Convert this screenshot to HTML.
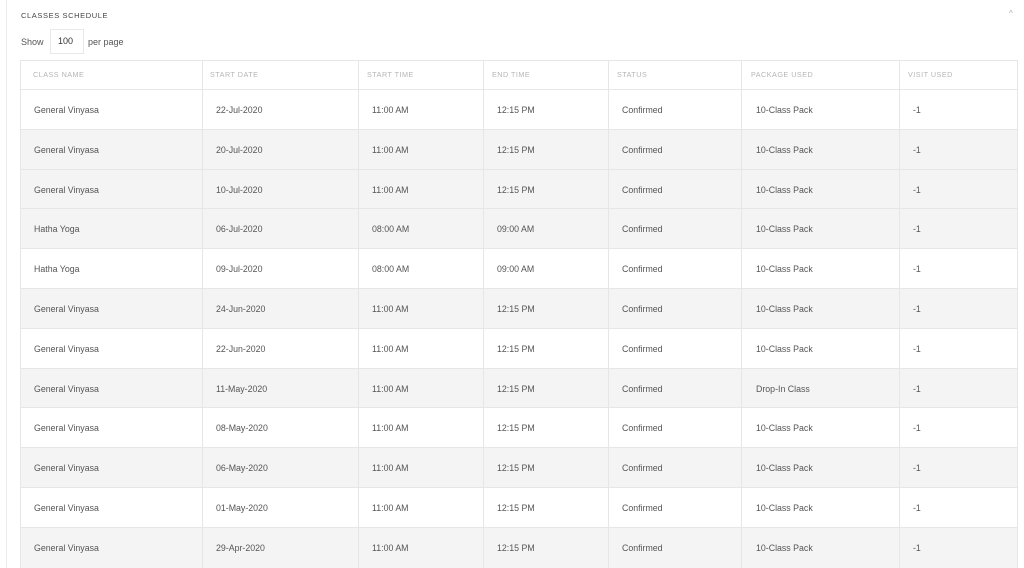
<!DOCTYPE html>
<html><head><meta charset="utf-8"><style>
*{margin:0;padding:0;box-sizing:border-box}
html,body{width:1024px;height:568px;overflow:hidden}
body{background:#fff;font-family:"Liberation Sans",sans-serif;position:relative;color:#555}
.vl{position:absolute;left:6px;top:0;width:1px;height:568px;background:#ececec}
.title{position:absolute;left:21px;top:11px;font-size:7.5px;letter-spacing:.6px;color:#444}
.car{position:absolute;left:1009px;top:9px;font-size:8px;color:#aaa}
.show{position:absolute;left:21px;top:37px;font-size:9px;color:#555}
.inp{position:absolute;left:50px;top:29px;width:34px;height:25px;border:1px solid #e8e8e8;font-size:9px;color:#333;padding:6px 0 0 7px}
.pp{position:absolute;left:88px;top:37px;font-size:9px;color:#555}
.row{position:absolute;left:20px;width:998px;border-top:1px solid #e6e6e6}
.cell{position:absolute;top:0;font-size:8.8px;color:#555}
.h .cell{font-size:7.2px;color:#b5b5b5;letter-spacing:.5px}
.col{position:absolute;top:60px;width:1px;height:508px;background:#e6e6e6}
.top{position:absolute;left:20px;top:60px;width:998px;height:1px;background:#e6e6e6}
</style></head><body>
<div class="vl"></div>
<div class="title">CLASSES SCHEDULE</div>
<div class="car">^</div>
<div class="show">Show</div><div class="inp">100</div><div class="pp">per page</div>
<div id="rows"></div>
<div class="top"></div>
<div class="col" style="left:20px"></div><div class="col" style="left:202px"></div><div class="col" style="left:358px"></div><div class="col" style="left:483px"></div><div class="col" style="left:608px"></div><div class="col" style="left:741px"></div><div class="col" style="left:899px"></div><div class="col" style="left:1017px"></div>
<script>
var L=[14,196,352,477,602,736,893],H=[13,190,347,472,597,731,888],data=[
["General Vinyasa","22-Jul-2020","11:00 AM","12:15 PM","Confirmed","10-Class Pack","-1"],
["General Vinyasa","20-Jul-2020","11:00 AM","12:15 PM","Confirmed","10-Class Pack","-1"],
["General Vinyasa","10-Jul-2020","11:00 AM","12:15 PM","Confirmed","10-Class Pack","-1"],
["Hatha Yoga","06-Jul-2020","08:00 AM","09:00 AM","Confirmed","10-Class Pack","-1"],
["Hatha Yoga","09-Jul-2020","08:00 AM","09:00 AM","Confirmed","10-Class Pack","-1"],
["General Vinyasa","24-Jun-2020","11:00 AM","12:15 PM","Confirmed","10-Class Pack","-1"],
["General Vinyasa","22-Jun-2020","11:00 AM","12:15 PM","Confirmed","10-Class Pack","-1"],
["General Vinyasa","11-May-2020","11:00 AM","12:15 PM","Confirmed","Drop-In Class","-1"],
["General Vinyasa","08-May-2020","11:00 AM","12:15 PM","Confirmed","10-Class Pack","-1"],
["General Vinyasa","06-May-2020","11:00 AM","12:15 PM","Confirmed","10-Class Pack","-1"],
["General Vinyasa","01-May-2020","11:00 AM","12:15 PM","Confirmed","10-Class Pack","-1"],
["General Vinyasa","29-Apr-2020","11:00 AM","12:15 PM","Confirmed","10-Class Pack","-1"]];
var h='<div class="row h" style="top:60px;height:29px;border-top:none">';
["CLASS NAME","START DATE","START TIME","END TIME","STATUS","PACKAGE USED","VISIT USED"].forEach(function(t,i){h+='<div class="cell" style="left:'+H[i]+'px;top:10px">'+t+'</div>'});
h+='</div>';
data.forEach(function(r,j){var top=89+j*39.8;var bg=(j%2==1||j==2)?'#f4f4f4':'#fff';var ht=(j==11)?(568-top):39.8;
h+='<div class="row" style="top:'+top+'px;height:'+ht+'px;background:'+bg+'">';
r.forEach(function(t,i){h+='<div class="cell" style="left:'+L[i]+'px;top:15px">'+t+'</div>'});h+='</div>'});
document.getElementById('rows').innerHTML=h;
</script>
</body></html>
